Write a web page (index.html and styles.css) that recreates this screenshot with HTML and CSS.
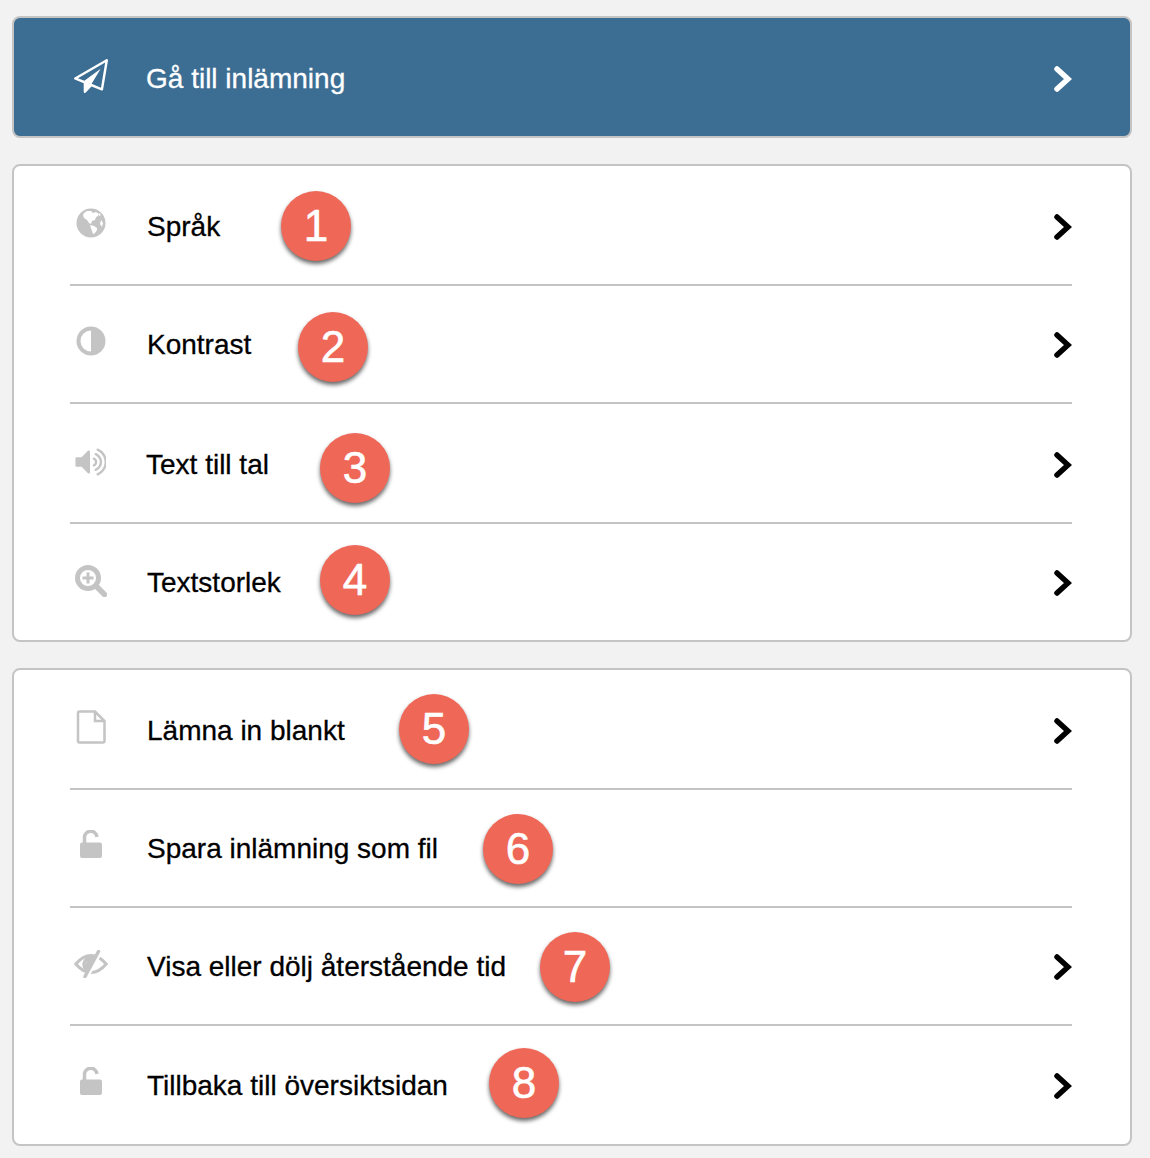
FILE: index.html
```html
<!DOCTYPE html>
<html lang="sv">
  <head>
    <meta charset="UTF-8" />
    <meta name="viewport" content="width=device-width, initial-scale=1.0" />
    <title>Meny</title>
    <link rel="stylesheet" href="styles.css">
  </head>
  <body>
    <div class="card card-primary">
      <a class="row row-primary">
        <svg class="icon icon-plane" viewBox="0 0 1792 1792"><path d="M1764 11q33 24 27 64l-256 1536q-5 29-32 45-14 8-31 8-11 0-24-5l-527-215-298 327q-18 21-47 21-14 0-23-4-19-7-30-23.5t-11-36.5v-452l-472-193q-37-14-40-55-3-39 32-59l1664-960q35-21 68 2zm-342 1499l221-1323-1434 827 336 137 863-639-478 797z"/></svg>
        <span class="label">Gå till inlämning</span>
        <svg class="chevron" viewBox="0 0 18 26"><path d="M3 3l11 10L3 23"/></svg>
      </a>
    </div>

    <div class="card">
      <a class="row row-first">
        <svg class="icon icon-globe" viewBox="0 0 30 30">
          <circle cx="15" cy="15" r="14.5"/>
          <path class="cut" d="M8 5l3-2 4 0 2 2 3-1 3 2-1 2-2 1-1 3-3 1-1 3-2-1-2-3-3-2-1-3zM14 17l4 1 3 2 0 2-2 3-2 1-1-3-1-3zM23 5l2 2-2 1zM25 12l2 3-1 4-2-3z"/>
        </svg>
        <span class="label">Språk</span>
        <span class="badge badge-1">1</span>
        <svg class="chevron" viewBox="0 0 18 26"><path d="M3 3l11 10L3 23"/></svg>
      </a>
      <a class="row">
        <svg class="icon icon-adjust" viewBox="0 0 30 30">
          <circle cx="15" cy="15" r="14.5"/>
          <path class="cut" d="M15 4.500a10.500 10.500 0 0 0 0 21z"/>
        </svg>
        <span class="label">Kontrast</span>
        <span class="badge badge-2">2</span>
        <svg class="chevron" viewBox="0 0 18 26"><path d="M3 3l11 10L3 23"/></svg>
      </a>
      <a class="row row-tall">
        <svg class="icon icon-wide" viewBox="0 0 1664 1792"><path d="M832 352v1088q0 26-19 45t-45 19-45-19l-333-333h-262q-26 0-45-19t-19-45v-384q0-26 19-45t45-19h262l333-333q19-19 45-19t45 19 19 45zm384 544q0 76-42.500 141.500t-112.500 93.500q-10 5-25 5-26 0-45-18.500t-19-45.500q0-21 12-35.500t29-25 34-23 29-36 12-56.500-12-56.500-29-36-34-23-29-25-12-35.500q0-27 19-45.500t45-18.500q15 0 25 5 70 27 112.500 93t42.500 142zm256 0q0 153-85 282.500t-225 188.500q-13 5-25 5-27 0-46-19t-19-45q0-39 39-59 56-29 76-44 74-54 115.500-135.500t41.500-173.500-41.500-173.500-115.500-135.500q-20-15-76-44-39-20-39-59 0-26 19-45t45-19q13 0 26 5 140 59 225 188.500t85 282.500zm256 0q0 230-127 422.500t-338 283.500q-13 5-26 5-26 0-45-19t-19-45q0-36 39-59 7-4 22.500-10.500t22.500-10.500q46-25 82-51 123-91 192-227t69-289-69-289-192-227q-36-26-82-51-7-4-22.500-10.500t-22.500-10.500q-39-23-39-59 0-26 19-45t45-19q13 0 26 5 211 91 338 283.500t127 422.500z"/></svg>
        <span class="label">Text till tal</span>
        <span class="badge badge-3">3</span>
        <svg class="chevron" viewBox="0 0 18 26"><path d="M3 3l11 10L3 23"/></svg>
      </a>
      <a class="row">
        <svg class="icon icon-line" viewBox="0 0 32 32">
          <circle cx="13" cy="13" r="10.500"/>
          <path class="handle" d="M21 21l8.500 8.500"/>
          <path class="thin" d="M13 7.500v11M7.500 13h11"/>
        </svg>
        <span class="label">Textstorlek</span>
        <span class="badge badge-4">4</span>
        <svg class="chevron" viewBox="0 0 18 26"><path d="M3 3l11 10L3 23"/></svg>
      </a>
    </div>

    <div class="card">
      <a class="row row-first">
        <svg class="icon icon-file" viewBox="0 0 30 34">
          <path d="M2 3q0-1.500 1.500-1.500H19L28.500 11v20q0 1.500-1.500 1.500H3.500Q2 32.500 2 31zM19 1.500V11h9.500"/>
        </svg>
        <span class="label">Lämna in blankt</span>
        <span class="badge badge-5">5</span>
        <svg class="chevron" viewBox="0 0 18 26"><path d="M3 3l11 10L3 23"/></svg>
      </a>
      <a class="row">
        <svg class="icon icon-lock" viewBox="0 0 22 28">
          <path d="M0 14.500q0-2 2-2h18q2 0 2 2V26q0 2-2 2H2q-2 0-2-2z"/>
          <path class="shackle" d="M4.500 13V8a6.200 6.200 0 0 1 12.500-1"/>
        </svg>
        <span class="label">Spara inlämning som fil</span>
        <span class="badge badge-6">6</span>
      </a>
      <a class="row">
        <svg class="icon icon-eye" viewBox="0 0 34 28">
          <path class="stroke" d="M1.800 14Q9 5.500 17 5.500T32.200 14Q25 22.500 17 22.500T1.800 14z"/>
          <path d="M18 6a8.500 8.500 0 0 0-7.500 14l2 1.500L20.500 9q-1-3-2.500-3z"/>
          <path class="cut" d="M13 11a5 5 0 0 0-1.500 4 10 10 0 0 1 1.500-4z"/>
          <path class="gap" d="M25.500 5L15 24"/>
          <path class="slash" d="M24.500 1.500L11 26.500"/>
        </svg>
        <span class="label">Visa eller dölj återstående tid</span>
        <span class="badge badge-7">7</span>
        <svg class="chevron" viewBox="0 0 18 26"><path d="M3 3l11 10L3 23"/></svg>
      </a>
      <a class="row row-end">
        <svg class="icon icon-lock" viewBox="0 0 22 28">
          <path d="M0 14.500q0-2 2-2h18q2 0 2 2V26q0 2-2 2H2q-2 0-2-2z"/>
          <path class="shackle" d="M4.500 13V8a6.200 6.200 0 0 1 12.500-1"/>
        </svg>
        <span class="label">Tillbaka till översiktsidan</span>
        <span class="badge badge-8">8</span>
        <svg class="chevron" viewBox="0 0 18 26"><path d="M3 3l11 10L3 23"/></svg>
      </a>
    </div>
  </body>
</html>
```

FILE: styles.css
```css
* {
  margin: 0;
  padding: 0;
  box-sizing: border-box;
  font-family: "Liberation Sans", Arial, sans-serif;
}
body {
  background: #f2f2f2;
  color: #000;
  padding: 16px 18px 13px 12px;
}
.card {
  background: #fff;
  border: 2px solid #c4c4c4;
  border-radius: 8px;
  padding: 0 58px 0 56px;
  margin-bottom: 26px;
}
.card:last-child {
  margin-bottom: 0;
}
.card-primary {
  background: #3c6d93;
  color: #fff;
}
.row {
  position: relative;
  display: flex;
  align-items: center;
  height: 118px;
  padding-top: 2px;
  border-bottom: 2px solid #c4c4c4;
  font-size: 28px;
  -webkit-text-stroke: 0.3px currentColor;
}
.row:last-child {
  border-bottom: none;
  height: 116px;
}
.row-first,
.row-tall {
  height: 120px;
  padding-top: 4px;
}
.row.row-end {
  height: 118px;
}
.row.row-primary {
  height: 118px;
  padding-top: 4px;
  border-bottom: none;
}
.icon {
  flex: none;
  width: 34px;
  height: 34px;
  margin: 0 38px 6px 4px;
  fill: #c4c4c4;
}
.row-primary .icon {
  fill: #fff;
}
.cut {
  fill: #fff;
}
.icon-wide {
  width: 32px;
  height: 34px;
  margin: 0 40px 6px 4px;
}
.icon-globe,
.icon-adjust {
  width: 30px;
  height: 30px;
  margin: 0 41px 8px 6px;
}
.icon-line {
  width: 32px;
  height: 32px;
  margin: 0 40px 4px 5px;
  fill: none;
  stroke: #c4c4c4;
  stroke-width: 5;
  stroke-linecap: round;
}
.icon-line .handle {
  stroke-width: 5.500;
}
.icon-line .thin {
  stroke-width: 3;
  stroke-linecap: butt;
}
.icon-file {
  width: 30px;
  height: 34px;
  margin: 0 41px 8px 6px;
  fill: none;
  stroke: #c4c4c4;
  stroke-width: 2.500;
}
.icon-lock {
  width: 22px;
  height: 28px;
  margin: 0 45px 10px 10px;
}
.shackle {
  fill: none;
  stroke: #c4c4c4;
  stroke-width: 3.500;
}
.icon-eye {
  width: 34px;
  height: 28px;
  margin: 0 39px 6px 4px;
}
.stroke {
  fill: none;
  stroke: #c4c4c4;
  stroke-width: 3;
}
.gap {
  fill: none;
  stroke: #fff;
  stroke-width: 3;
}
.slash {
  fill: none;
  stroke: #c4c4c4;
  stroke-width: 3.500;
  stroke-linecap: round;
}
.chevron {
  flex: none;
  width: 18px;
  height: 26px;
  margin-left: auto;
  fill: none;
  stroke: #000;
  stroke-width: 5.500;
  stroke-linecap: round;
  -webkit-text-stroke: 0;
}
.row-primary .chevron {
  stroke: #fff;
}
.badge {
  position: absolute;
  width: 70px;
  height: 70px;
  border-radius: 50%;
  background: #ef6757;
  box-shadow: 0 3px 4px rgba(0, 0, 0, 0.6);
  color: #fff;
  font-size: 44px;
  line-height: 70px;
  text-align: center;
  -webkit-text-stroke: 0.6px #fff;
}
.badge-1 { left: 211px; top: 25px; }
.badge-2 { left: 228px; top: 26px; }
.badge-3 { left: 250px; top: 29px; }
.badge-4 { left: 250px; top: 21px; }
.badge-5 { left: 329px; top: 24px; }
.badge-6 { left: 413px; top: 24px; }
.badge-7 { left: 470px; top: 24px; }
.badge-8 { left: 419px; top: 22px; }
```
